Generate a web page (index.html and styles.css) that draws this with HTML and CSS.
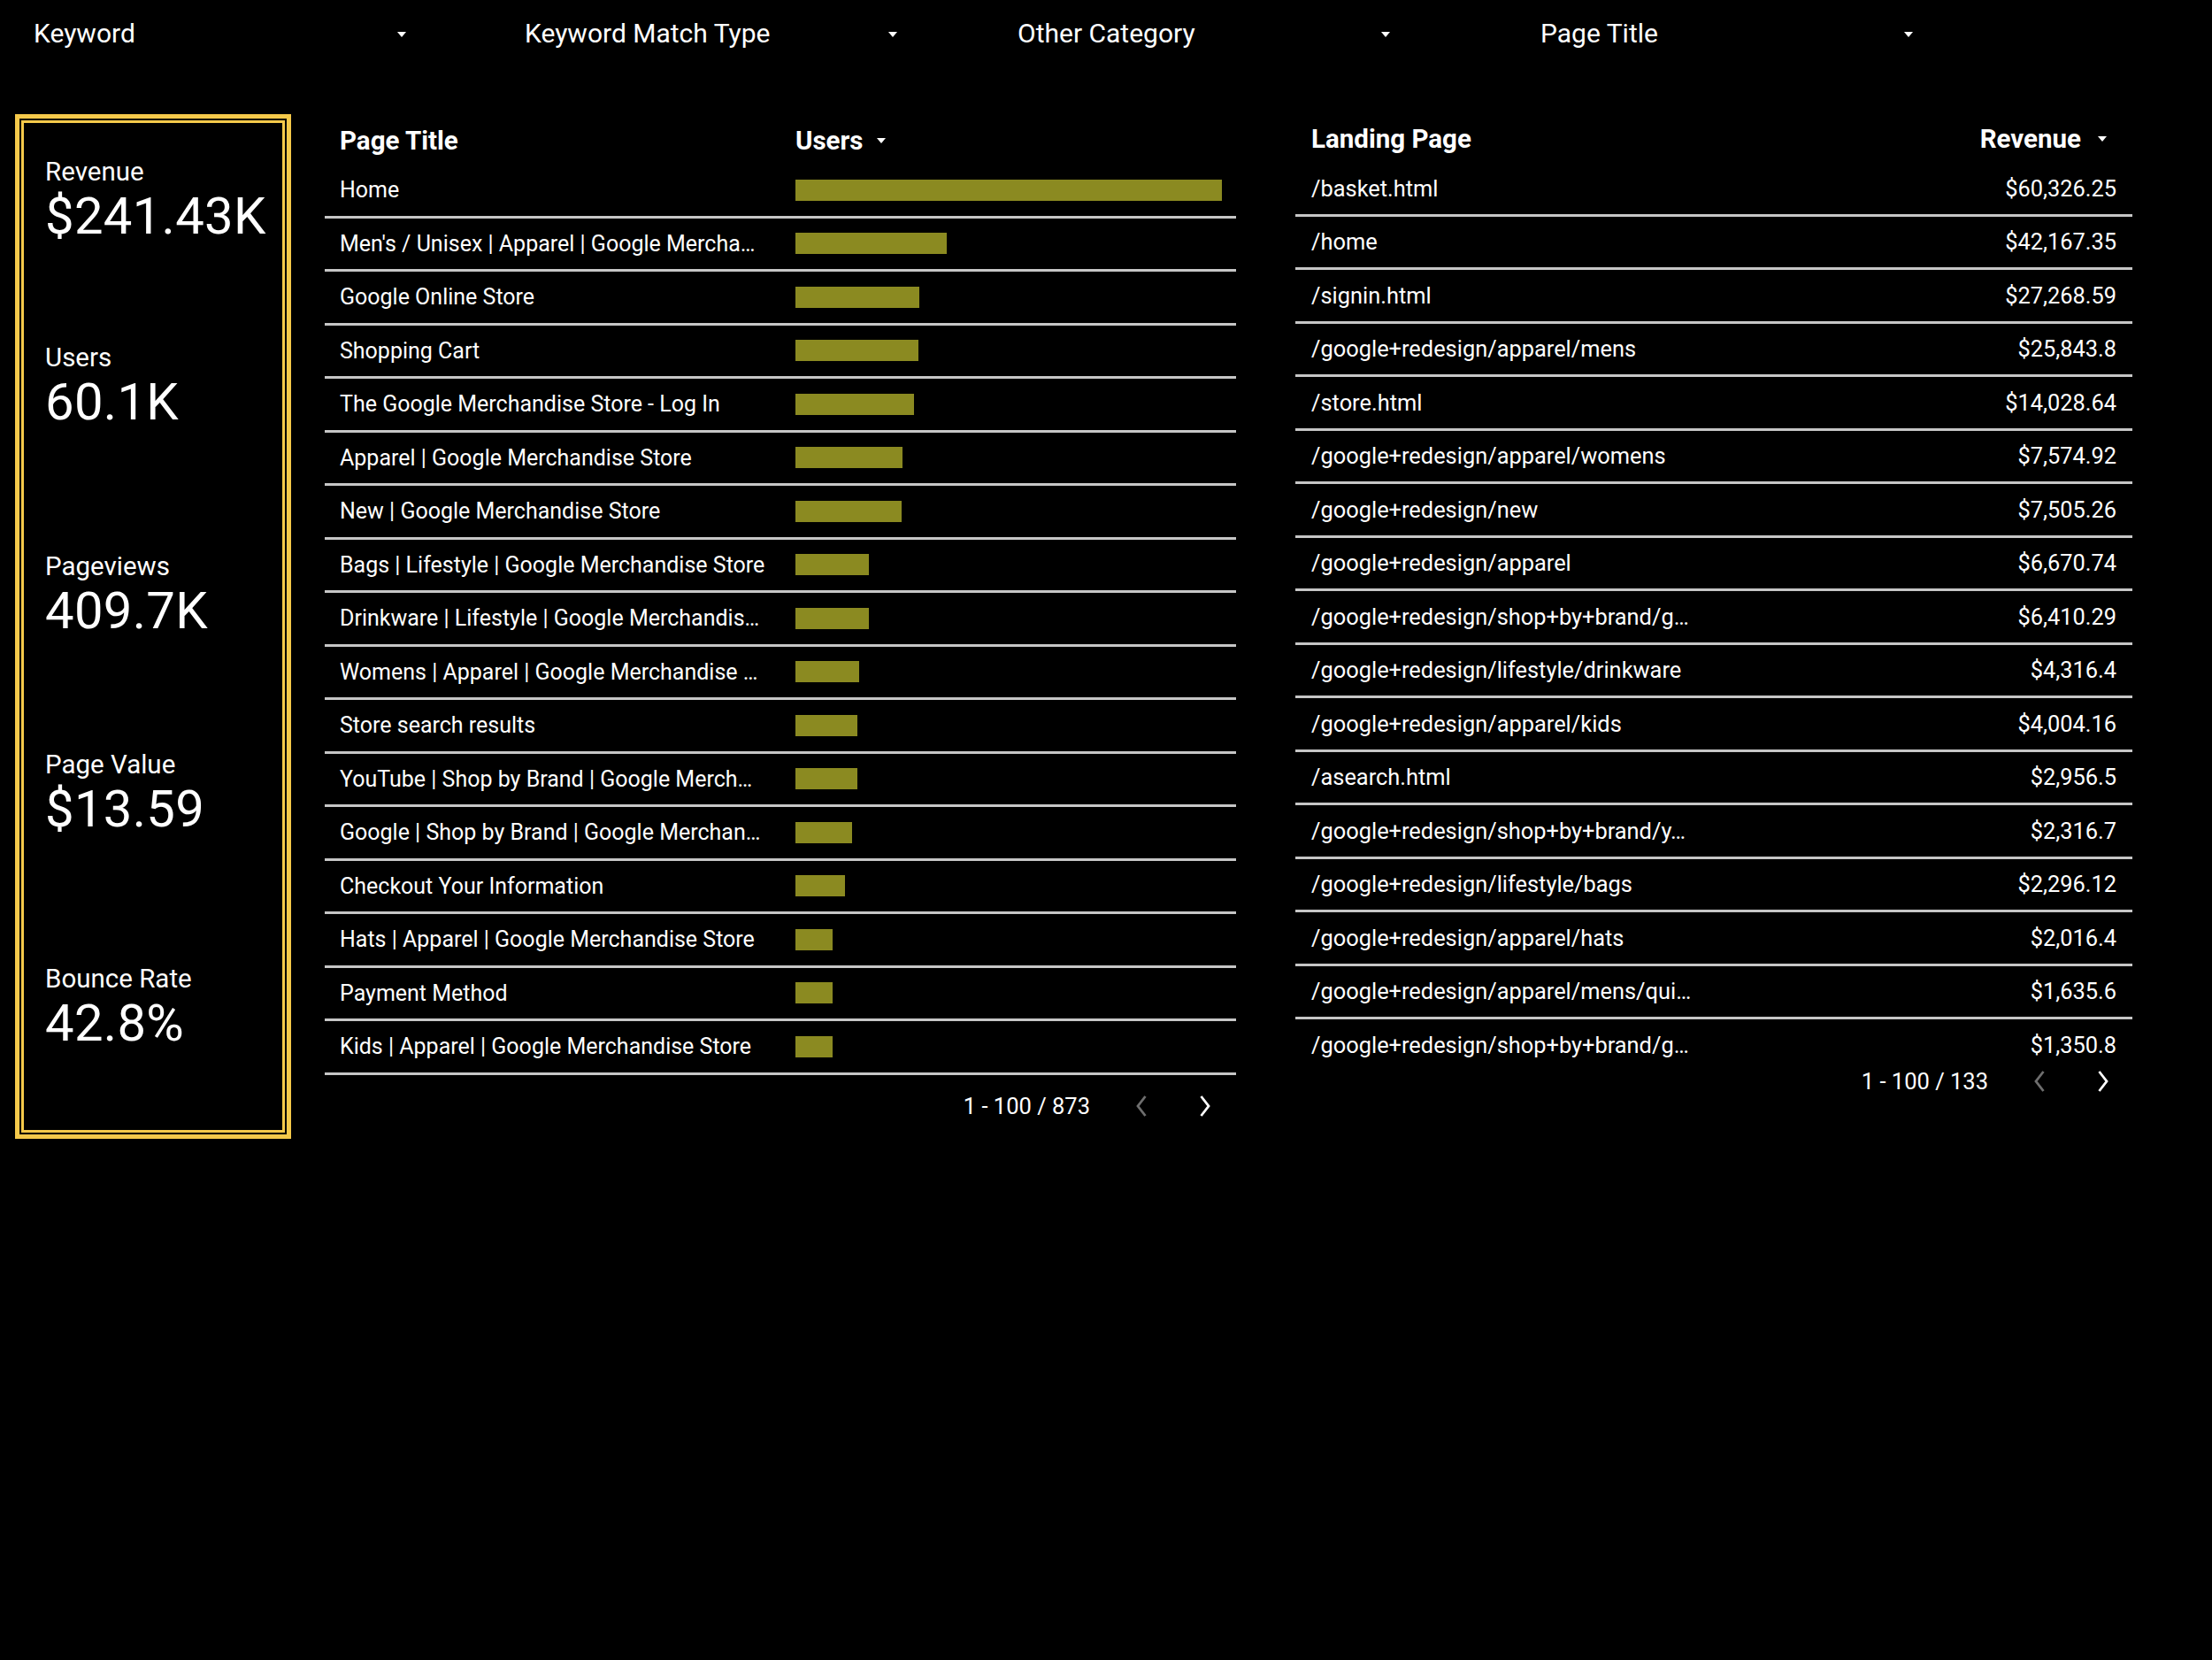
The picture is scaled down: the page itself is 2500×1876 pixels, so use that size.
FILE: index.html
```html
<!DOCTYPE html>
<html lang="en">
<head>
<meta charset="utf-8">
<title>Dashboard</title>
<link rel="stylesheet" href="styles.css">
</head>
<body>
<div class="filters">
  <div class="filter"><span>Keyword</span><span class="caret"></span></div>
  <div class="filter"><span>Keyword Match Type</span><span class="caret"></span></div>
  <div class="filter"><span>Other Category</span><span class="caret"></span></div>
  <div class="filter"><span>Page Title</span><span class="caret"></span></div>
</div>

<div class="main">
  <div class="scorecards">
    <div class="scorecards-inner">
      <div class="card card-1"><div class="card-label">Revenue</div><div class="card-value">$241.43K</div></div>
      <div class="card card-2"><div class="card-label">Users</div><div class="card-value">60.1K</div></div>
      <div class="card card-3"><div class="card-label">Pageviews</div><div class="card-value">409.7K</div></div>
      <div class="card card-4"><div class="card-label">Page Value</div><div class="card-value">$13.59</div></div>
      <div class="card card-5"><div class="card-label">Bounce Rate</div><div class="card-value">42.8%</div></div>
    </div>
  </div>

  <div class="table table-users">
    <div class="thead">
      <div class="col-title">Page Title</div>
      <div class="col-bar">Users<span class="sort"></span></div>
    </div>
    <div class="row"><div class="col-title">Home</div><div class="col-bar"><span class="bar" style="width:482px"></span></div></div>
    <div class="row"><div class="col-title">Men's / Unisex | Apparel | Google Mercha…</div><div class="col-bar"><span class="bar" style="width:171px"></span></div></div>
    <div class="row"><div class="col-title">Google Online Store</div><div class="col-bar"><span class="bar" style="width:140px"></span></div></div>
    <div class="row"><div class="col-title">Shopping Cart</div><div class="col-bar"><span class="bar" style="width:139px"></span></div></div>
    <div class="row"><div class="col-title">The Google Merchandise Store - Log In</div><div class="col-bar"><span class="bar" style="width:134px"></span></div></div>
    <div class="row"><div class="col-title">Apparel | Google Merchandise Store</div><div class="col-bar"><span class="bar" style="width:121px"></span></div></div>
    <div class="row"><div class="col-title">New | Google Merchandise Store</div><div class="col-bar"><span class="bar" style="width:120px"></span></div></div>
    <div class="row"><div class="col-title">Bags | Lifestyle | Google Merchandise Store</div><div class="col-bar"><span class="bar" style="width:83px"></span></div></div>
    <div class="row"><div class="col-title">Drinkware | Lifestyle | Google Merchandis…</div><div class="col-bar"><span class="bar" style="width:83px"></span></div></div>
    <div class="row"><div class="col-title">Womens | Apparel | Google Merchandise …</div><div class="col-bar"><span class="bar" style="width:72px"></span></div></div>
    <div class="row"><div class="col-title">Store search results</div><div class="col-bar"><span class="bar" style="width:70px"></span></div></div>
    <div class="row"><div class="col-title">YouTube | Shop by Brand | Google Merch…</div><div class="col-bar"><span class="bar" style="width:70px"></span></div></div>
    <div class="row"><div class="col-title">Google | Shop by Brand | Google Merchan…</div><div class="col-bar"><span class="bar" style="width:64px"></span></div></div>
    <div class="row"><div class="col-title">Checkout Your Information</div><div class="col-bar"><span class="bar" style="width:56px"></span></div></div>
    <div class="row"><div class="col-title">Hats | Apparel | Google Merchandise Store</div><div class="col-bar"><span class="bar" style="width:42px"></span></div></div>
    <div class="row"><div class="col-title">Payment Method</div><div class="col-bar"><span class="bar" style="width:42px"></span></div></div>
    <div class="row"><div class="col-title">Kids | Apparel | Google Merchandise Store</div><div class="col-bar"><span class="bar" style="width:42px"></span></div></div>
    <div class="pager pager-users">
      <span class="pager-text">1 - 100 / 873</span>
      <span class="pager-btn prev"><svg viewBox="0 0 24 26" width="24" height="26"><polyline points="15.5,2 7,13 15.5,24" fill="none" stroke="currentColor" stroke-width="2.8"/></svg></span>
      <span class="pager-btn next"><svg viewBox="0 0 24 26" width="24" height="26"><polyline points="8.5,2 17,13 8.5,24" fill="none" stroke="currentColor" stroke-width="2.8"/></svg></span>
    </div>
  </div>

  <div class="table table-landing">
    <div class="thead">
      <div class="col-page">Landing Page</div>
      <div class="col-rev">Revenue<span class="sort"></span></div>
    </div>
    <div class="row"><div class="col-page">/basket.html</div><div class="col-rev">$60,326.25</div></div>
    <div class="row"><div class="col-page">/home</div><div class="col-rev">$42,167.35</div></div>
    <div class="row"><div class="col-page">/signin.html</div><div class="col-rev">$27,268.59</div></div>
    <div class="row"><div class="col-page">/google+redesign/apparel/mens</div><div class="col-rev">$25,843.8</div></div>
    <div class="row"><div class="col-page">/store.html</div><div class="col-rev">$14,028.64</div></div>
    <div class="row"><div class="col-page">/google+redesign/apparel/womens</div><div class="col-rev">$7,574.92</div></div>
    <div class="row"><div class="col-page">/google+redesign/new</div><div class="col-rev">$7,505.26</div></div>
    <div class="row"><div class="col-page">/google+redesign/apparel</div><div class="col-rev">$6,670.74</div></div>
    <div class="row"><div class="col-page">/google+redesign/shop+by+brand/g…</div><div class="col-rev">$6,410.29</div></div>
    <div class="row"><div class="col-page">/google+redesign/lifestyle/drinkware</div><div class="col-rev">$4,316.4</div></div>
    <div class="row"><div class="col-page">/google+redesign/apparel/kids</div><div class="col-rev">$4,004.16</div></div>
    <div class="row"><div class="col-page">/asearch.html</div><div class="col-rev">$2,956.5</div></div>
    <div class="row"><div class="col-page">/google+redesign/shop+by+brand/y…</div><div class="col-rev">$2,316.7</div></div>
    <div class="row"><div class="col-page">/google+redesign/lifestyle/bags</div><div class="col-rev">$2,296.12</div></div>
    <div class="row"><div class="col-page">/google+redesign/apparel/hats</div><div class="col-rev">$2,016.4</div></div>
    <div class="row"><div class="col-page">/google+redesign/apparel/mens/qui…</div><div class="col-rev">$1,635.6</div></div>
    <div class="row row-last"><div class="col-page">/google+redesign/shop+by+brand/g…</div><div class="col-rev">$1,350.8</div></div>
    <div class="pager pager-landing">
      <span class="pager-text">1 - 100 / 133</span>
      <span class="pager-btn prev"><svg viewBox="0 0 24 26" width="24" height="26"><polyline points="15.5,2 7,13 15.5,24" fill="none" stroke="currentColor" stroke-width="2.8"/></svg></span>
      <span class="pager-btn next"><svg viewBox="0 0 24 26" width="24" height="26"><polyline points="8.5,2 17,13 8.5,24" fill="none" stroke="currentColor" stroke-width="2.8"/></svg></span>
    </div>
  </div>
</div>
</body>
</html>
```

FILE: styles.css
```css
html, body {
  margin: 0;
  padding: 0;
  background: #000;
  color: #fff;
  font-family: Roboto, "Noto Sans", "Liberation Sans", sans-serif;
}

body {
  width: 2500px;
  min-height: 1876px;
}

/* ---------- filter bar ---------- */
.filters {
  display: grid;
  grid-template-columns: 555px 557px 591px 430px;
  align-items: center;
  height: 75px;
  padding-left: 38px;
}

.filter {
  display: flex;
  align-items: center;
  justify-content: space-between;
  width: 421px;
  font-size: 30px;
  line-height: 34px;
}

.caret {
  width: 0;
  height: 0;
  border-left: 5.5px solid transparent;
  border-right: 5.5px solid transparent;
  border-top: 6px solid #fff;
  margin-top: 2px;
}

/* ---------- main area ---------- */
.main {
  display: flex;
  align-items: flex-start;
  margin-top: 54px;
  padding-left: 17px;
}

.scorecards {
  box-sizing: border-box;
  width: 312px;
  height: 1158px;
  border: 5px solid #f5c94a;
  padding: 2px;
  background: #000;
}

.scorecards-inner {
  box-sizing: border-box;
  height: 100%;
  border: 3px solid #f5c94a;
  padding-left: 24px;
  display: flex;
  flex-direction: column;
}

.card-label {
  font-size: 29.5px;
  line-height: 30px;
}

.card-value {
  font-size: 58px;
  line-height: 70px;
  letter-spacing: 0.3px;
}

.card-1 { margin-top: 40px; }
.card-2 { margin-top: 110px; }
.card-3 { margin-top: 136px; }
.card-4 { margin-top: 124px; }
.card-5 { margin-top: 142px; }

/* ---------- tables ---------- */
.table {
  box-sizing: border-box;
}

.table-users {
  width: 1030px;
  margin-left: 38px;
  margin-top: 3px;
}

.table-landing {
  width: 946px;
  margin-left: 67px;
  margin-top: 1px;
}

.thead {
  display: flex;
  align-items: center;
  height: 54px;
  font-size: 29.5px;
  font-weight: 700;
}

.row {
  box-sizing: border-box;
  display: flex;
  align-items: center;
  height: 60.5px;
  border-bottom: 3px solid #c6c6c6;
  font-size: 25px;
}

.table-landing .row {
  font-size: 25.4px;
}

.row-last {
  border-bottom: none;
  height: 57.5px;
}

.col-title {
  box-sizing: border-box;
  width: 532px;
  padding-left: 17px;
  white-space: nowrap;
  overflow: hidden;
}

.col-bar {
  flex: 1;
  display: flex;
  align-items: center;
}

.bar {
  display: block;
  height: 24px;
  background: #8b8a21;
}

.sort {
  display: inline-block;
  width: 0;
  height: 0;
  border-left: 5px solid transparent;
  border-right: 5px solid transparent;
  border-top: 6px solid #fff;
  margin-left: 15px;
  vertical-align: middle;
}

.col-page {
  flex: 1;
  padding-left: 18px;
  white-space: nowrap;
}

.col-rev {
  padding-right: 18px;
  text-align: right;
  white-space: nowrap;
}

.thead .col-rev {
  padding-right: 29px;
  display: flex;
  align-items: center;
}

.thead .col-rev .sort {
  margin-left: 19px;
}

/* ---------- pagination ---------- */
.pager {
  display: flex;
  align-items: center;
  justify-content: flex-end;
  font-size: 25.5px;
}

.pager-users {
  height: 71px;
  padding-right: 24px;
}

.pager-landing {
  height: 24px;
  padding-right: 22px;
}

.pager-text {
  margin-right: 47px;
}

.pager-btn {
  display: flex;
  width: 24px;
  height: 26px;
}

.pager-btn.prev {
  color: #6e6e6e;
  margin-right: 46px;
}

.pager-btn.next {
  color: #fff;
}
```
